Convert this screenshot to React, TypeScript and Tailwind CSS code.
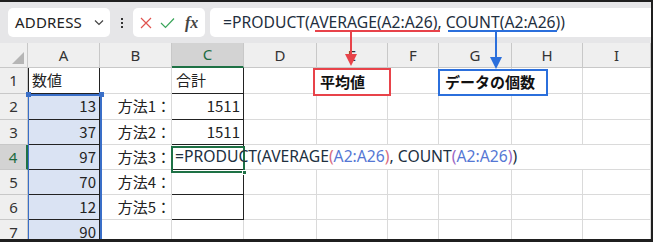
import React from "react";

const cols = [
  { k: "A", w: "w-[72px]" },
  { k: "B", w: "w-[72px]" },
  { k: "C", w: "w-[72px]" },
  { k: "D", w: "w-[73px]" },
  { k: "E", w: "w-[71px]" },
  { k: "F", w: "w-[51px]" },
  { k: "G", w: "w-[73px]" },
  { k: "H", w: "w-[71px]" },
  { k: "I", w: "w-[68px]" },
];

const rowH = ["h-[26px]", "h-[26px]", "h-[25px]", "h-[25px]", "h-[25px]", "h-[25px]", "h-[25px]"];

const aVals = ["", "13", "37", "97", "70", "12", "90"];
const bVals = ["", "方法1：", "方法2：", "方法3：", "方法4：", "方法5：", ""];
const cVals = ["合計", "1511", "1511", "", "", "", ""];

function Formula() {
  return (
    <span className="whitespace-nowrap text-[#20303f]">
      =PRODUCT(AVERAGE<span className="text-[#d86a7e]">(</span>
      <span className="text-[#5577d4]">A2:A26</span>
      <span className="text-[#d86a7e]">)</span>, COUNT
      <span className="text-[#9a66c4]">(</span>
      <span className="text-[#5577d4]">A2:A26</span>
      <span className="text-[#9a66c4]">)</span>)
    </span>
  );
}

export default function App() {
  const font = { fontFamily: '"Noto Sans", "Noto Sans CJK JP", sans-serif' };
  const jp = { fontFamily: '"Noto Sans CJK JP", sans-serif' };
  return (
    <div
      className="w-[653px] h-[242px] bg-[#1f1f1f] pt-[2px] pr-[2px] overflow-hidden"
      style={font}
    >
      <div className="relative w-[651px] h-[237px] bg-white overflow-hidden">
        {/* toolbar */}
        <div className="h-[41px] bg-[#e6e6e8] flex items-center pl-[8px]">
          <div className="w-[102px] h-[29px] bg-white rounded-[5px] flex items-center justify-between pl-[7px] pr-[6px]">
            <span className="text-[15px] text-[#222] tracking-[0.2px]">ADDRESS</span>
            <svg width="10" height="7" viewBox="0 0 10 7">
              <path d="M1 1.5 L5 5.5 L9 1.5" fill="none" stroke="#444" strokeWidth="1.2" />
            </svg>
          </div>
          <div className="w-[23px] flex flex-col items-center gap-[2px]">
            <div className="w-[2px] h-[2px] bg-[#333]" />
            <div className="w-[2px] h-[2px] bg-[#333]" />
            <div className="w-[2px] h-[2px] bg-[#333]" />
          </div>
          <div className="w-[72px] h-[29px] bg-white rounded-[5px] flex items-center pl-[7px] gap-[8px]">
            <svg width="12" height="12" viewBox="0 0 12 12">
              <path d="M1 1 L11 11 M11 1 L1 11" stroke="#e0534f" strokeWidth="1.2" />
            </svg>
            <svg width="15" height="12" viewBox="0 0 15 12">
              <path d="M1 6 L5.5 10.5 L14 1.5" fill="none" stroke="#3aa55a" strokeWidth="1.2" />
            </svg>
            <span
              className="text-[16px] italic text-[#444] font-bold ml-[2px]"
              style={{ fontFamily: '"Liberation Serif", serif' }}
            >
              fx
            </span>
          </div>
          <div className="ml-[5px] flex-1 h-[29px] bg-white rounded-l-[5px] flex items-center pl-[13px] text-[15.7px] text-[#1f2f40]">
            <span className="whitespace-nowrap">=PRODUCT(AVERAGE(A2:A26), COUNT(A2:A26))</span>
          </div>
        </div>

        {/* column headers */}
        <div className="flex h-[25px] bg-[#efefef]">
          <div className="w-[28px] h-full border-r border-b border-[#c8c8c8] flex items-end justify-end p-[3px]">
            <div className="w-0 h-0 border-l-[12px] border-l-transparent border-b-[12px] border-b-[#b5b5b5]" />
          </div>
          {cols.map((c) => (
            <div
              key={c.k}
              className={`${c.w} h-full flex items-center justify-center text-[15px] border-r ${
                c.k === "C"
                  ? "bg-[#d3d3d3] text-[#1c6b40] border-b-2 border-b-[#1e7145] border-r-[#c8c8c8]"
                  : "text-[#333] border-b border-[#c8c8c8]"
              }`}
            >
              {c.k}
            </div>
          ))}
        </div>

        {/* rows */}
        {rowH.map((h, r) => (
          <div key={r} className={`flex ${h}`}>
            <div
              className={`w-[28px] h-full flex items-center justify-center text-[15px] border-b border-[#c8c8c8] ${
                r === 3
                  ? "bg-[#d3d3d3] text-[#1c6b40] border-r-2 border-r-[#1e7145]"
                  : "bg-[#efefef] text-[#333] border-r border-r-[#c8c8c8]"
              }`}
            >
              {r + 1}
            </div>
            {/* A */}
            <div
              className={`w-[72px] h-full flex items-center text-[15px] text-[#222] border-l border-l-[#222] border-r border-r-[#222] ${
                r === 0 ? "justify-start pl-[3px] bg-white" : "justify-end pr-[3px] bg-[#dae3f3]"
              } ${r < 6 ? "border-b border-b-[#222]" : "border-b border-b-[#dadada]"}`}
              style={jp}
            >
              {r === 0 ? "数値" : aVals[r]}
            </div>
            {/* B */}
            <div
              className="w-[72px] h-full flex items-center justify-end text-[15px] text-[#222] border-r border-b border-[#dadada]"
              style={jp}
            >
              {bVals[r]}
            </div>
            {/* C */}
            <div
              className={`relative w-[72px] h-full flex items-center text-[15px] text-[#222] ${
                r < 6 ? "border-r border-b border-[#222]" : "border-r border-b border-[#dadada]"
              } ${r === 0 ? "justify-start pl-[4px]" : "justify-end pr-[3px]"}`}
              style={jp}
            >
              {cVals[r]}
              {r === 3 && (
                <div
                  className="absolute left-[3px] top-0 h-full flex items-center z-10 text-[15.7px]"
                  style={font}
                >
                  <Formula />
                </div>
              )}
            </div>
            {cols.slice(3).map((c) => (
              <div
                key={c.k}
                className={`${c.w} h-full border-b border-[#dadada] ${
                  r === 3 && c.k !== "I" ? "" : "border-r"
                }`}
              />
            ))}
          </div>
        ))}

        {/* selection A2:A7 */}
        <div className="absolute left-[28px] top-[92px] w-[74px] h-[160px] border-t-2 border-r-2 border-l border-[#3a6fc8]">
          <div className="absolute -left-[3px] -top-[4px] w-[5px] h-[5px] bg-[#3a6fc8]" />
          <div className="absolute -right-[4px] -top-[4px] w-[5px] h-[5px] bg-[#3a6fc8]" />
        </div>

        {/* active cell C4 */}
        <div className="absolute left-[171px] top-[144px] w-[74px] h-[27px] border-2 border-[#1e7145]">
          <div className="absolute -right-[4px] -bottom-[4px] w-[5px] h-[5px] bg-[#1e7145] border border-white" />
        </div>

        {/* annotations */}
        <svg className="absolute left-0 top-0" width="651" height="240">
          <line x1="315" y1="29" x2="440" y2="29" stroke="#e8434a" strokeWidth="2" />
          <line x1="351" y1="29" x2="351" y2="54" stroke="#e8434a" strokeWidth="2" />
          <polygon points="345,52 357,52 351,64" fill="#e8434a" />
          <line x1="448" y1="29" x2="557" y2="29" stroke="#2b6fdc" strokeWidth="2" />
          <line x1="496" y1="29" x2="496" y2="57" stroke="#2b6fdc" strokeWidth="2" />
          <polygon points="490,55 502,55 496,67" fill="#2b6fdc" />
        </svg>
        <div
          className="absolute left-[313px] top-[66px] w-[78px] h-[28px] border-2 border-[#e8434a] bg-white flex items-center pl-[5px] text-[15px] font-bold text-[#111]"
          style={jp}
        >
          平均値
        </div>
        <div
          className="absolute left-[438px] top-[67px] w-[110px] h-[27px] border-2 border-[#2b6fdc] bg-white flex items-center pl-[5px] text-[15px] font-bold text-[#111]"
          style={jp}
        >
          データの個数
        </div>
      </div>
    </div>
  );
}
